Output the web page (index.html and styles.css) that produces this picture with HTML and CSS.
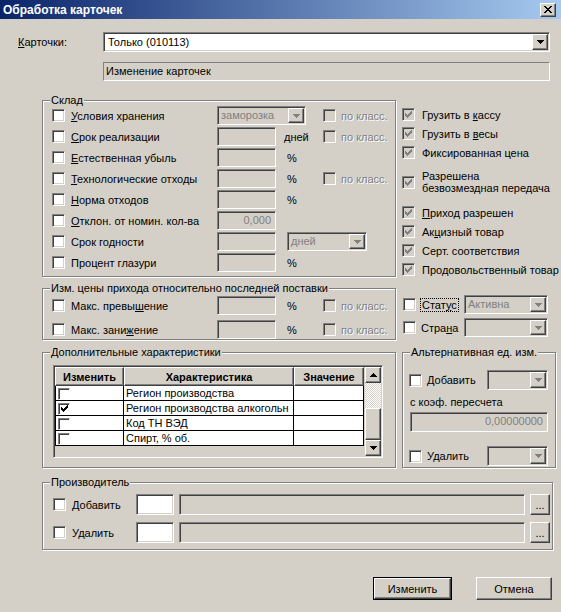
FILE: index.html
```html
<!DOCTYPE html>
<html lang="ru">
<head>
    <meta charset="UTF-8">
    <title>Обработка карточек</title>
    <link rel="stylesheet" href="styles.css">
</head>
<body>
<div class="window">
    <div class="titlebar">
        <span class="title">Обработка карточек</span>
        <button class="close-btn raised" type="button">
            <svg width="8" height="7" viewBox="0 0 8 7"><path d="M0 0h2v1H0zM6 0h2v1H6zM1 1h2v1H1zM5 1h2v1H5zM2 2h4v1H2zM3 3h2v1H3zM2 4h4v1H2zM1 5h2v1H1zM5 5h2v1H5zM0 6h2v1H0zM6 6h2v1H6z"/></svg>
        </button>
    </div>

    <div class="cards-row">
        <span class="cards-label"><u>К</u>арточки:</span>
        <div class="combo sunken white cards-combo">
            <span class="combo-text">Только (010113)</span>
            <span class="drop raised"><svg width="7" height="4" viewBox="0 0 7 4"><path d="M0 0h7v1H0zM1 1h5v1H1zM2 2h3v1H2zM3 3h1v1H3z"/></svg></span>
        </div>
    </div>
    <div class="info-field">Изменение карточек</div>

    <div class="main">
        <!-- склад -->
        <div class="group sklad">
            <span class="legend">Склад</span>
            <div class="frows">
                <div class="frow">
                    <span class="cb sunken white"></span>
                    <span class="flabel"><u>У</u>словия хранения</span>
                    <div class="combo sunken off combo-store">
                        <span class="combo-text">заморозка</span>
                        <span class="drop raised off"><svg width="7" height="4" viewBox="0 0 7 4"><path d="M0 0h7v1H0zM1 1h5v1H1zM2 2h3v1H2zM3 3h1v1H3z"/></svg></span>
                    </div>
                    <span class="cb sunken off col5"></span>
                    <span class="dlabel">по класс.</span>
                </div>
                <div class="frow">
                    <span class="cb sunken white"></span>
                    <span class="flabel"><u>С</u>рок реализации</span>
                    <span class="field sunken"></span>
                    <span class="unit">дней</span>
                    <span class="cb sunken off"></span>
                    <span class="dlabel">по класс.</span>
                </div>
                <div class="frow">
                    <span class="cb sunken white"></span>
                    <span class="flabel"><u>Е</u>стественная убыль</span>
                    <span class="field sunken"></span>
                    <span class="unit pct">%</span>
                </div>
                <div class="frow">
                    <span class="cb sunken white"></span>
                    <span class="flabel"><u>Т</u>ехнологические отходы</span>
                    <span class="field sunken"></span>
                    <span class="unit pct">%</span>
                    <span class="cb sunken off"></span>
                    <span class="dlabel">по класс.</span>
                </div>
                <div class="frow">
                    <span class="cb sunken white"></span>
                    <span class="flabel"><u>Н</u>орма отходов</span>
                    <span class="field sunken"></span>
                    <span class="unit pct">%</span>
                </div>
                <div class="frow">
                    <span class="cb sunken white"></span>
                    <span class="flabel"><u>О</u>тклон. от номин. кол-ва</span>
                    <span class="field sunken num">0,000</span>
                </div>
                <div class="frow">
                    <span class="cb sunken white"></span>
                    <span class="flabel">Срок годности</span>
                    <span class="field sunken"></span>
                    <div class="combo sunken off combo-days">
                        <span class="combo-text">дней</span>
                        <span class="drop raised off"><svg width="7" height="4" viewBox="0 0 7 4"><path d="M0 0h7v1H0zM1 1h5v1H1zM2 2h3v1H2zM3 3h1v1H3z"/></svg></span>
                    </div>
                </div>
                <div class="frow">
                    <span class="cb sunken white"></span>
                    <span class="flabel">Процент глазури</span>
                    <span class="field sunken"></span>
                    <span class="unit pct">%</span>
                </div>
            </div>
        </div>

        <!-- флаги карточки -->
        <ul class="flags">
            <li><span class="cb sunken off"><svg class="chk" width="7" height="7" viewBox="0 0 7 7"><path d="M0 2h1v3H0zM1 3h1v3H1zM2 4h1v3H2zM3 3h1v3H3zM4 2h1v3H4zM5 1h1v3H5zM6 0h1v3H6z"/></svg></span><span>Грузить в <u>к</u>ассу</span></li>
            <li><span class="cb sunken off"><svg class="chk" width="7" height="7" viewBox="0 0 7 7"><path d="M0 2h1v3H0zM1 3h1v3H1zM2 4h1v3H2zM3 3h1v3H3zM4 2h1v3H4zM5 1h1v3H5zM6 0h1v3H6z"/></svg></span><span>Грузить в <u>в</u>есы</span></li>
            <li><span class="cb sunken off"><svg class="chk" width="7" height="7" viewBox="0 0 7 7"><path d="M0 2h1v3H0zM1 3h1v3H1zM2 4h1v3H2zM3 3h1v3H3zM4 2h1v3H4zM5 1h1v3H5zM6 0h1v3H6z"/></svg></span><span>Фиксированная цена</span></li>
            <li class="wrap"><span class="cb sunken off"><svg class="chk" width="7" height="7" viewBox="0 0 7 7"><path d="M0 2h1v3H0zM1 3h1v3H1zM2 4h1v3H2zM3 3h1v3H3zM4 2h1v3H4zM5 1h1v3H5zM6 0h1v3H6z"/></svg></span><span>Разрешена<br>безвозмездная передача</span></li>
            <li><span class="cb sunken off"><svg class="chk" width="7" height="7" viewBox="0 0 7 7"><path d="M0 2h1v3H0zM1 3h1v3H1zM2 4h1v3H2zM3 3h1v3H3zM4 2h1v3H4zM5 1h1v3H5zM6 0h1v3H6z"/></svg></span><span><u>П</u>риход разрешен</span></li>
            <li><span class="cb sunken off"><svg class="chk" width="7" height="7" viewBox="0 0 7 7"><path d="M0 2h1v3H0zM1 3h1v3H1zM2 4h1v3H2zM3 3h1v3H3zM4 2h1v3H4zM5 1h1v3H5zM6 0h1v3H6z"/></svg></span><span>Ак<u>ц</u>изный товар</span></li>
            <li><span class="cb sunken off"><svg class="chk" width="7" height="7" viewBox="0 0 7 7"><path d="M0 2h1v3H0zM1 3h1v3H1zM2 4h1v3H2zM3 3h1v3H3zM4 2h1v3H4zM5 1h1v3H5zM6 0h1v3H6z"/></svg></span><span>Серт. соответствия</span></li>
            <li><span class="cb sunken off"><svg class="chk" width="7" height="7" viewBox="0 0 7 7"><path d="M0 2h1v3H0zM1 3h1v3H1zM2 4h1v3H2zM3 3h1v3H3zM4 2h1v3H4zM5 1h1v3H5zM6 0h1v3H6z"/></svg></span><span>Продовольственный товар</span></li>
        </ul>

        <!-- изменение цены прихода -->
        <div class="group price">
            <span class="legend">Изм. цены прихода относительно последней поставки</span>
            <div class="frows price-rows">
                <div class="frow">
                    <span class="cb sunken white"></span>
                    <span class="flabel">Макс. превы<u>ш</u>ение</span>
                    <span class="field sunken"></span>
                    <span class="unit pct">%</span>
                    <span class="cb sunken off"></span>
                    <span class="dlabel">по класс.</span>
                </div>
                <div class="frow">
                    <span class="cb sunken white"></span>
                    <span class="flabel">Макс. зани<u>ж</u>ение</span>
                    <span class="field sunken"></span>
                    <span class="unit pct">%</span>
                    <span class="cb sunken off"></span>
                    <span class="dlabel">по класс.</span>
                </div>
            </div>
        </div>

        <div class="status-box">
            <div class="srow">
                <span class="cb sunken white"></span>
                <span class="slabel"><span class="focus">Стат<u>у</u>с</span></span>
                <div class="combo sunken off combo-side">
                    <span class="combo-text">Активна</span>
                    <span class="drop raised off"><svg width="7" height="4" viewBox="0 0 7 4"><path d="M0 0h7v1H0zM1 1h5v1H1zM2 2h3v1H2zM3 3h1v1H3z"/></svg></span>
                </div>
            </div>
            <div class="srow">
                <span class="cb sunken white"></span>
                <span class="slabel">Стра<u>н</u>а</span>
                <div class="combo sunken off combo-side">
                    <span class="combo-text"></span>
                    <span class="drop raised off"><svg width="7" height="4" viewBox="0 0 7 4"><path d="M0 0h7v1H0zM1 1h5v1H1zM2 2h3v1H2zM3 3h1v1H3z"/></svg></span>
                </div>
            </div>
        </div>

        <!-- дополнительные характеристики -->
        <div class="group extra">
            <span class="legend">Дополнительные характеристики</span>
            <div class="grid-box sunken">
                <table class="char-table">
                    <colgroup><col class="c-edit"><col class="c-name"><col class="c-val"></colgroup>
                    <thead>
                        <tr><th class="raised">Изменить</th><th class="raised">Характеристика</th><th class="raised">Значение</th></tr>
                    </thead>
                    <tbody>
                        <tr><td><span class="gcb"></span></td><td>Регион производства</td><td></td></tr>
                        <tr><td><span class="gcb"><svg width="7" height="7" viewBox="0 0 7 7"><path d="M0 2h1v3H0zM1 3h1v3H1zM2 4h1v3H2zM3 3h1v3H3zM4 2h1v3H4zM5 1h1v3H5zM6 0h1v3H6z"/></svg></span></td><td>Регион производства алкогольн</td><td></td></tr>
                        <tr><td><span class="gcb"></span></td><td>Код ТН ВЭД</td><td></td></tr>
                        <tr><td><span class="gcb"></span></td><td>Спирт, % об.</td><td></td></tr>
                    </tbody>
                </table>
                <div class="scrollbar">
                    <span class="sb-btn raised"><svg width="7" height="4" viewBox="0 0 7 4"><path d="M3 0h1v1H3zM2 1h3v1H2zM1 2h5v1H1zM0 3h7v1H0z"/></svg></span>
                    <span class="sb-track"></span>
                    <span class="sb-thumb raised"></span>
                    <span class="sb-btn raised"><svg width="7" height="4" viewBox="0 0 7 4"><path d="M0 0h7v1H0zM1 1h5v1H1zM2 2h3v1H2zM3 3h1v1H3z"/></svg></span>
                </div>
            </div>
        </div>

        <!-- альтернативная единица -->
        <div class="group alt">
            <span class="legend">Альтернативная ед. изм.</span>
            <div class="arow">
                <span class="cb sunken white"></span>
                <span class="alabel">Добавить</span>
                <div class="combo sunken off combo-alt">
                    <span class="combo-text"></span>
                    <span class="drop raised off"><svg width="7" height="4" viewBox="0 0 7 4"><path d="M0 0h7v1H0zM1 1h5v1H1zM2 2h3v1H2zM3 3h1v1H3z"/></svg></span>
                </div>
            </div>
            <div class="coef-label">с коэф. пересчета</div>
            <div class="field sunken num coef-field">0,00000000</div>
            <div class="arow arow-del">
                <span class="cb sunken white"></span>
                <span class="alabel">Удалить</span>
                <div class="combo sunken off combo-alt">
                    <span class="combo-text"></span>
                    <span class="drop raised off"><svg width="7" height="4" viewBox="0 0 7 4"><path d="M0 0h7v1H0zM1 1h5v1H1zM2 2h3v1H2zM3 3h1v1H3z"/></svg></span>
                </div>
            </div>
        </div>
    </div>

    <!-- производитель -->
    <div class="group maker">
        <span class="legend">Производитель</span>
        <div class="mrow">
            <span class="cb sunken white"></span>
            <span class="mlabel">Добавить</span>
            <span class="field sunken white code"></span>
            <span class="field sunken wide"></span>
            <button class="dots raised" type="button">...</button>
        </div>
        <div class="mrow">
            <span class="cb sunken white"></span>
            <span class="mlabel">Удалить</span>
            <span class="field sunken white code"></span>
            <span class="field sunken wide"></span>
            <button class="dots raised" type="button">...</button>
        </div>
    </div>

    <div class="actions">
        <button class="button default" type="button"><span class="raised">Изменить</span></button>
        <button class="button raised cancel" type="button">Отмена</button>
    </div>
</div>
</body>
</html>
```

FILE: styles.css
```css
body {
    margin: 0;
    background: #d4d0c8;
    font-family: 'Liberation Sans', Arial, sans-serif;
    font-size: 11px;
    color: #000;
}

.window {
    width: 561px;
    height: 612px;
    overflow: hidden;
    background: #d4d0c8;
}

/* 3D borders, Windows classic */
.raised {
    box-sizing: border-box;
    background: #d4d0c8;
    border: 1px solid;
    border-color: #fff #404040 #404040 #fff;
    box-shadow: inset -1px -1px 0 #808080, inset 1px 1px 0 #d4d0c8;
}

.sunken {
    box-sizing: border-box;
    background: #d4d0c8;
    border: 1px solid;
    border-color: #808080 #fff #fff #808080;
    box-shadow: inset 1px 1px 0 #404040, inset -1px -1px 0 #d4d0c8;
}

.sunken.white {
    background: #fff;
}

button {
    font: inherit;
    color: #000;
    padding: 0;
    margin: 0;
}

/* title bar */
.titlebar {
    height: 19px;
    display: flex;
    align-items: center;
    padding-left: 3px;
    background: linear-gradient(to right, #0a246a, #a6caf0);
}

.title {
    color: #fff;
    font-weight: bold;
    font-size: 12px;
}

.close-btn {
    margin-left: auto;
    margin-right: 5px;
    width: 16px;
    height: 14px;
    display: flex;
    align-items: center;
    justify-content: center;
}

/* checkbox */
.cb {
    width: 13px;
    height: 13px;
    flex-shrink: 0;
    display: flex;
    align-items: center;
    justify-content: center;
}

.cb.off svg {
    fill: #808080;
}

/* combo & fields */
.combo {
    display: flex;
    align-items: stretch;
    padding: 1px;
    height: 19px;
}

.combo-text {
    flex: 1;
    padding-left: 2px;
    line-height: 15px;
    white-space: nowrap;
    overflow: hidden;
}

.combo.off .combo-text {
    color: #808080;
}

.drop {
    width: 16px;
    flex-shrink: 0;
    display: flex;
    align-items: center;
    justify-content: center;
}

.drop.off svg {
    fill: #808080;
}

.field {
    display: block;
    height: 19px;
}

.field.num {
    color: #808080;
    text-align: right;
    padding-right: 4px;
    line-height: 17px;
}

/* top rows */
.cards-row {
    display: flex;
    align-items: center;
    margin-top: 13px;
    padding-left: 18px;
}

.cards-label {
    width: 85px;
}

.cards-combo {
    width: 447px;
    height: 20px;
}

.cards-combo .combo-text {
    line-height: 16px;
    padding-left: 3px;
}

.info-field {
    margin: 10px 0 0 103px;
    width: 447px;
    height: 19px;
    box-sizing: border-box;
    border: 1px solid;
    border-color: #808080 #fff #fff #808080;
    padding-left: 2px;
    line-height: 17px;
}

/* group boxes */
.group {
    box-sizing: border-box;
    position: relative;
    border: 1px solid #808080;
    box-shadow: inset 1px 1px 0 #fff, 1px 1px 0 #fff;
}

.legend {
    position: absolute;
    top: -7px;
    left: 7px;
    padding: 0 1px;
    line-height: 13px;
    background: #d4d0c8;
    white-space: nowrap;
}

.main {
    display: grid;
    grid-template-columns: 354px 154px;
    grid-template-rows: 188px 64px 116px;
    column-gap: 6px;
    margin: 19px 0 0 42px;
    align-items: start;
}

/* склад */
.sklad {
    height: 177px;
    padding: 5px 0 0 9px;
}

.frows {
    display: flex;
    flex-direction: column;
    gap: 2px;
}

.frow {
    display: grid;
    grid-template-columns: 13px 152px 59px 47px 13px 1fr;
    height: 19px;
    align-items: center;
}

.flabel {
    padding-left: 6px;
    white-space: nowrap;
}

.unit {
    padding-left: 8px;
}

.unit.pct {
    padding-left: 11px;
}

.col5 {
    grid-column: 5;
}

.dlabel {
    padding-left: 5px;
    color: #808080;
    text-shadow: 1px 1px 0 #fff;
    white-space: nowrap;
}

.combo-store {
    grid-column: 3 / 5;
    width: 89px;
}

.combo-days {
    grid-column: 4 / 7;
    width: 80px;
    margin-left: 11px;
}

/* флаги */
.flags {
    list-style: none;
    margin: 0;
    padding: 5px 0 0 0;
}

.flags li {
    display: flex;
    align-items: center;
    height: 19px;
    white-space: nowrap;
}

.flags .cb {
    margin-right: 7px;
}

.flags li.wrap {
    height: 26px;
    margin: 7px 0 8px;
    line-height: 12px;
}

/* цены */
.price {
    height: 52px;
    padding: 7px 0 0 9px;
}

.price-rows {
    gap: 5px;
}

.status-box {
    padding-top: 7px;
}

.srow {
    display: flex;
    align-items: center;
    height: 19px;
    margin-bottom: 4px;
    padding-left: 1px;
}

.slabel {
    flex: 1;
    padding-left: 5px;
}

.focus {
    outline: 1px dotted #000;
    padding: 0 1px;
}

.combo-side {
    width: 84px;
    margin-right: 8px;
}

/* дополнительные характеристики */
.extra {
    height: 116px;
    padding: 12px 0 0 10px;
}

.grid-box {
    width: 330px;
    height: 93px;
    padding: 1px;
    display: flex;
    align-items: flex-start;
}

.char-table {
    width: 309px;
    table-layout: fixed;
    border-collapse: separate;
    border-spacing: 0;
}

.c-edit { width: 69px; }
.c-name { width: 170px; }
.c-val { width: 70px; }

.char-table th {
    height: 19px;
    padding: 0;
    font-weight: bold;
    text-align: center;
}

.char-table td {
    box-sizing: border-box;
    height: 15px;
    padding: 0 0 0 2px;
    background: #fff;
    border-right: 1px solid #000;
    border-bottom: 1px solid #000;
    white-space: nowrap;
    overflow: hidden;
    line-height: 13px;
}

.char-table td:first-child {
    border-left: 1px solid #000;
}

.gcb {
    display: flex;
    align-items: center;
    justify-content: center;
    box-sizing: border-box;
    width: 12px;
    height: 12px;
    margin-top: 1px;
    background: #fff;
    border: 1px solid;
    border-color: #808080 #fff #fff #808080;
    box-shadow: inset 1px 1px 0 #404040;
}

.scrollbar {
    width: 16px;
    margin-left: 1px;
    display: flex;
    flex-direction: column;
}

.sb-btn {
    height: 16px;
    display: flex;
    align-items: center;
    justify-content: center;
}

.sb-track {
    height: 25px;
    background: repeating-conic-gradient(#fff 0 25%, #d4d0c8 0 50%) 0 0 / 2px 2px;
}

.sb-thumb {
    height: 32px;
}

/* альтернативная ед. */
.alt {
    height: 116px;
}

.arow {
    display: flex;
    align-items: center;
    margin-top: 17px;
    padding-left: 6px;
}

.arow-del {
    margin-top: 14px;
}

.alabel {
    flex: 1;
    padding-left: 5px;
}

.combo-alt {
    width: 61px;
    height: 20px;
    margin-right: 7px;
}

.coef-label {
    margin: 5px 0 0 7px;
    line-height: 14px;
}

.coef-field {
    margin: 3px 0 0 7px;
    width: 138px;
    height: 20px;
    line-height: 18px;
}

/* производитель */
.maker {
    width: 511px;
    height: 68px;
    margin: 14px 0 0 42px;
    padding: 11px 0 0 10px;
}

.mrow {
    display: flex;
    align-items: center;
    height: 21px;
    margin-bottom: 7px;
}

.mlabel {
    box-sizing: border-box;
    width: 70px;
    padding-left: 6px;
}

.field.code {
    width: 38px;
    height: 21px;
}

.field.wide {
    width: 346px;
    height: 21px;
    margin-left: 5px;
}

.dots {
    width: 20px;
    height: 21px;
    margin-left: 5px;
    font-size: 11px;
    line-height: 17px;
    padding-top: 2px;
}

/* кнопки */
.actions {
    display: flex;
    justify-content: flex-end;
    margin-top: 27px;
    padding-right: 9px;
    gap: 24px;
}

.button {
    height: 23px;
    font-size: 11px;
}

.button.default {
    width: 79px;
    border: 1px solid #000;
    background: #d4d0c8;
    display: flex;
}

.button.default .raised {
    flex: 1;
    display: flex;
    align-items: center;
    justify-content: center;
}

.button.cancel {
    width: 76px;
}
```
